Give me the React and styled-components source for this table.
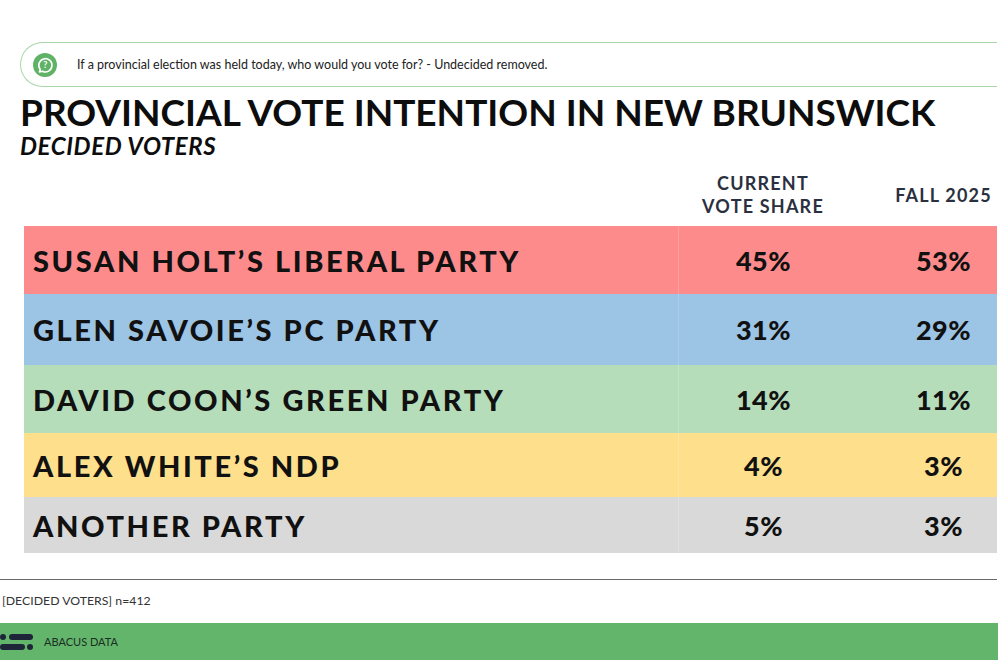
import React from "react";
import styled, { createGlobalStyle } from "styled-components";

const GlobalStyle = createGlobalStyle`
    body {
        margin: 0;
        background: #ffffff;
        font-family: "Lato", "Open Sans", sans-serif;
    }
`;

const Page = styled.div`
    width: 998px;
    height: 665px;
    overflow: hidden;
    background: #fff;
    padding-top: 42px;
    box-sizing: border-box;
`;

const QuestionBar = styled.div`
    display: flex;
    align-items: center;
    gap: 20px;
    height: 45px;
    margin-left: 20px;
    width: 977px;
    box-sizing: border-box;
    padding-left: 12px;
    border: 1.5px solid #a9d6a9;
    border-right: none;
    border-radius: 23px 0 0 23px;
`;

const QuestionText = styled.span`
    font-size: 12.5px;
    color: #222;
`;

const Title = styled.h1`
    margin: 5px 0 0 20px;
    font-size: 37px;
    line-height: 40px;
    font-weight: 700;
    color: #0d0d0d;
`;

const Subtitle = styled.h2`
    margin: 2px 0 0 20px;
    font-size: 24px;
    line-height: 24px;
    font-weight: 700;
    font-style: italic;
    letter-spacing: 0.6px;
    color: #0d0d0d;
`;

const Grid = styled.div`
    display: grid;
    grid-template-columns: 654px 170px 1fr;
    margin-left: 24px;
    width: 973px;
`;

const HeaderRow = styled(Grid)`
    margin-top: 14px;
    margin-bottom: 8px;
    align-items: center;
`;

const HeaderCell = styled.div`
    grid-column: ${(p) => p.col};
    text-align: center;
    font-size: 18px;
    line-height: 23px;
    font-weight: 700;
    letter-spacing: 1.2px;
    color: #2b3040;
    padding-left: ${(p) => (p.col === 3 ? "42px" : "0")};
`;

const Row = styled(Grid)`
    height: ${(p) => p.h}px;
    background: ${(p) => p.bg};
    align-items: center;
`;

const Label = styled.div`
    padding-left: 9px;
    font-size: 29px;
    font-weight: 900;
    letter-spacing: 2.6px;
    color: #111;
`;

const Value = styled.div`
    height: 100%;
    display: flex;
    align-items: center;
    justify-content: center;
    font-size: 27px;
    font-weight: 900;
    letter-spacing: 0.5px;
    color: #111;
    padding-left: ${(p) => (p.last ? "42px" : "0")};
    border-left: ${(p) => (p.last ? "none" : "1px solid rgba(255,255,255,0.18)")};
`;

const Rule = styled.hr`
    margin: 26px 0 0 0;
    width: 997px;
    border: none;
    border-top: 1px solid #6a6a6a;
`;

const SampleNote = styled.div`
    margin: 13px 0 0 2px;
    font-size: 12.3px;
    color: #333;
`;

const Footer = styled.div`
    margin-top: 15px;
    height: 37px;
    background: #63b56b;
    display: flex;
    align-items: center;
    gap: 10px;
`;

const Brand = styled.span`
    font-size: 11px;
    color: #1b2e24;
`;

const rows = [
    { label: "SUSAN HOLT’S LIBERAL PARTY", now: "45%", fall: "53%", bg: "#fe8b8b", h: 68 },
    { label: "GLEN SAVOIE’S PC PARTY", now: "31%", fall: "29%", bg: "#9cc4e5", h: 71 },
    { label: "DAVID COON’S GREEN PARTY", now: "14%", fall: "11%", bg: "#b6ddb9", h: 68 },
    { label: "ALEX WHITE’S NDP", now: "4%", fall: "3%", bg: "#fee08c", h: 64 },
    { label: "ANOTHER PARTY", now: "5%", fall: "3%", bg: "#d9d9d9", h: 56 },
];

const QuestionIcon = () => (
    <svg width="24" height="24" viewBox="0 0 24 24">
        <circle cx="12" cy="12" r="12" fill="#5fb266" />
        <path
            d="M7.2 16.4 A6.6 6.6 0 1 1 9.4 18.2 L6.4 18.9 Z"
            fill="none"
            stroke="#fff"
            strokeWidth="1.6"
            strokeLinejoin="round"
        />
        <text
            x="12.2"
            y="15.2"
            textAnchor="middle"
            fontSize="9"
            fontWeight="700"
            fill="#fff"
            fontFamily="Lato, sans-serif">
            ?
        </text>
    </svg>
);

const AbacusLogo = () => (
    <svg width="34" height="22" viewBox="0 0 34 22">
        <circle cx="3" cy="6" r="3" fill="#1e2538" />
        <rect x="9" y="3" width="24" height="6" rx="3" fill="#1e2538" />
        <rect x="0" y="13" width="25" height="6" rx="3" fill="#1e2538" />
        <circle cx="30" cy="16" r="3" fill="#1e2538" />
    </svg>
);

const App = () => {
    return (
        <Page>
            <GlobalStyle />
            <QuestionBar>
                <QuestionIcon />
                <QuestionText>
                    If a provincial election was held today, who would you
                    vote for? - Undecided removed.
                </QuestionText>
            </QuestionBar>
            <Title>PROVINCIAL VOTE INTENTION IN NEW BRUNSWICK</Title>
            <Subtitle>DECIDED VOTERS</Subtitle>
            <HeaderRow>
                <HeaderCell col={2}>
                    CURRENT
                    <br />
                    VOTE SHARE
                </HeaderCell>
                <HeaderCell col={3}>FALL 2025</HeaderCell>
            </HeaderRow>
            {rows.map((r) => (
                <Row key={r.label} bg={r.bg} h={r.h}>
                    <Label>{r.label}</Label>
                    <Value>{r.now}</Value>
                    <Value last>{r.fall}</Value>
                </Row>
            ))}
            <Rule />
            <SampleNote>[DECIDED VOTERS] n=412</SampleNote>
            <Footer>
                <AbacusLogo />
                <Brand>ABACUS DATA</Brand>
            </Footer>
        </Page>
    );
};

export default App;
